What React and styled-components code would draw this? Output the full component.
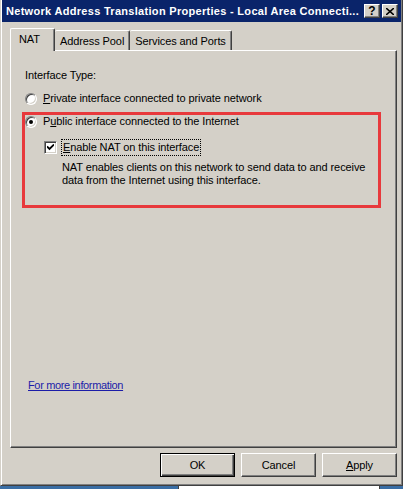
import React from "react";
import styled, { createGlobalStyle } from "styled-components";

const Global = createGlobalStyle`
  html, body { margin: 0; padding: 0; background: #3a6ea5; }
  body { font-family: "Liberation Sans", Arial, sans-serif; font-size: 11px; color: #000; letter-spacing: -0.1px; }
  * { box-sizing: border-box; }
`;

const Screen = styled.div`
  width: 403px;
  height: 489px;
  display: flex;
  flex-direction: column;
  overflow: hidden;
`;

const Window = styled.div`
  width: 403px;
  height: 486px;
  background: #d4d0c8;
  border-left: 1px solid #d4d0c8;
  border-right: 1px solid #404040;
  border-bottom: 1px solid #404040;
  box-shadow: inset 1px 0 #fff, inset -1px -1px #808080;
  display: flex;
  flex-direction: column;
  padding: 0 1px 0 1px;
`;

const TitleBar = styled.div`
  height: 22px;
  background: #0a246a;
  display: flex;
  align-items: center;
  padding: 0 3px 0 4px;
  flex: none;
`;

const Title = styled.div`
  flex: 1;
  color: #fff;
  font-weight: bold;
  font-size: 11px;
  letter-spacing: 0.3px;
  white-space: nowrap;
  overflow: hidden;
`;

const CaptionButton = styled.div`
  width: 16px;
  height: 14px;
  background: #d4d0c8;
  border: 1px solid;
  border-color: #fff #404040 #404040 #fff;
  box-shadow: inset -1px -1px #808080;
  display: flex;
  align-items: center;
  justify-content: center;
  margin-left: ${(p) => p.$gap || 0}px;
  font-weight: bold;
  font-size: 12px;
  line-height: 1;
  color: #000;
  letter-spacing: 0;
`;

const Body = styled.div`
  flex: 1;
  display: flex;
  flex-direction: column;
  padding: 6px 4px 0 8px;
`;

const TabStrip = styled.div`
  display: flex;
  align-items: flex-end;
  height: 22px;
  position: relative;
  z-index: 1;
`;

const Tab = styled.div`
  height: ${(p) => (p.$active ? 23 : 20)}px;
  min-width: ${(p) => (p.$active ? 45 : 0)}px;
  padding: 0 5px ${(p) => (p.$active ? 3 : 0)}px ${(p) => (p.$active ? 8 : 5)}px;
  margin-bottom: ${(p) => (p.$active ? -1 : 0)}px;
  background: #d4d0c8;
  border-top: 1px solid #fff;
  border-left: ${(p) => (p.$first || p.$active ? "1px solid #fff" : "0")};
  border-right: 1px solid #404040;
  box-shadow: inset -1px 0 #808080;
  border-radius: 2px 2px 0 0;
  display: flex;
  align-items: center;
  white-space: nowrap;
`;

const Panel = styled.div`
  height: 398px;
  border: 1px solid;
  border-color: #fff #404040 #404040 #fff;
  box-shadow: inset -1px -1px #808080;
  padding: 18px 15px 55px 14px;
  display: flex;
  flex-direction: column;
  line-height: 13px;
`;

const Label = styled.div`
  height: 13px;
`;

const Row = styled.label`
  display: flex;
  align-items: center;
  height: ${(p) => p.$h || 13}px;
  margin-top: ${(p) => p.$mt || 0}px;
  margin-left: ${(p) => p.$indent || 0}px;
  gap: ${(p) => p.$gap || 6}px;
`;

const Radio = styled.span`
  width: 12px;
  height: 12px;
  border-radius: 50%;
  background: #fff;
  border: 1px solid;
  border-color: #808080 #fff #fff #808080;
  box-shadow: inset 1px 1px #404040, inset -1px -1px #d4d0c8;
  display: flex;
  align-items: center;
  justify-content: center;
  flex: none;
  &::after {
    content: "";
    width: 4px;
    height: 4px;
    border-radius: 50%;
    background: ${(p) => (p.$on ? "#000" : "transparent")};
  }
`;

const Check = styled.span`
  width: 13px;
  height: 13px;
  background: #fff;
  border: 1px solid;
  border-color: #808080 #fff #fff #808080;
  box-shadow: inset 1px 1px #404040, inset -1px -1px #d4d0c8;
  display: flex;
  align-items: center;
  justify-content: center;
  flex: none;
`;

const Focus = styled.span`
  outline: 1px dotted #000;
  outline-offset: 0;
  padding: 1px 1px;
`;

const U = styled.span`
  text-decoration: underline;
`;

const Group = styled.div`
  position: relative;
  margin-top: 10px;
`;

const Annotation = styled.div`
  position: absolute;
  left: -3px;
  top: -3px;
  right: 0px;
  bottom: -21px;
  border: 3px solid #e8393c;
  pointer-events: none;
`;

const Description = styled.div`
  margin: 6px 0 0 37px;
  line-height: 13px;
`;

const Link = styled.a`
  margin-top: auto;
  margin-left: 3px;
  color: #1c1ca8;
  text-decoration: underline;
  height: 13px;
  letter-spacing: -0.35px;
`;

const ButtonRow = styled.div`
  display: flex;
  justify-content: flex-end;
  gap: 6px;
  margin-top: 5px;
  padding-right: 0;
`;

const Button = styled.div`
  width: 75px;
  height: 24px;
  background: #d4d0c8;
  display: flex;
  align-items: center;
  justify-content: center;
  border: 1px solid;
  border-color: ${(p) => (p.$default ? "#000" : "#fff #404040 #404040 #fff")};
  box-shadow: ${(p) =>
    p.$default
      ? "inset 1px 1px #fff, inset -1px -1px #404040, inset -2px -2px #808080"
      : "inset -1px -1px #808080"};
`;

const Strip = styled.div`
  height: 3px;
  display: flex;
`;

const StripBlock = styled.div`
  margin-left: 178px;
  width: 202px;
  background: #fff;
  border-left: 1px solid #404040;
  border-right: 1px solid #404040;
`;

export default function App() {
  return (
    <>
      <Global />
      <Screen>
        <Window>
          <TitleBar>
            <Title>Network Address Translation Properties - Local Area Connecti...</Title>
            <CaptionButton>?</CaptionButton>
            <CaptionButton $gap={2}>
              <svg width="8" height="7" viewBox="0 0 8 7">
                <path d="M0 0 L8 7 M8 0 L0 7" stroke="#000" strokeWidth="1.6" />
              </svg>
            </CaptionButton>
          </TitleBar>
          <Body>
            <TabStrip>
              <Tab $active $first>NAT</Tab>
              <Tab>Address Pool</Tab>
              <Tab>Services and Ports</Tab>
            </TabStrip>
            <Panel>
              <Label>Interface Type:</Label>
              <Row $mt={10}>
                <Radio />
                <span>
                  <U>P</U>rivate interface connected to private network
                </span>
              </Row>
              <Group>
                <Row>
                  <Radio $on />
                  <span>
                    P<U>u</U>blic interface connected to the Internet
                  </span>
                </Row>
                <Row $mt={12} $h={15} $indent={19} $gap={5}>
                  <Check>
                    <svg width="7" height="7" viewBox="0 0 7 7">
                      <path d="M0 2.5 L2.5 5 L7 0.5" stroke="#000" strokeWidth="1.8" fill="none" />
                    </svg>
                  </Check>
                  <Focus>
                    <U>E</U>nable NAT on this interface
                  </Focus>
                </Row>
                <Description>
                  NAT enables clients on this network to send data to and receive
                  <br />
                  data from the Internet using this interface.
                </Description>
                <Annotation />
              </Group>
              <Link>For more information</Link>
            </Panel>
            <ButtonRow>
              <Button $default>OK</Button>
              <Button>Cancel</Button>
              <Button>
                <span>
                  <U>A</U>pply
                </span>
              </Button>
            </ButtonRow>
          </Body>
        </Window>
        <Strip>
          <StripBlock />
        </Strip>
      </Screen>
    </>
  );
}
